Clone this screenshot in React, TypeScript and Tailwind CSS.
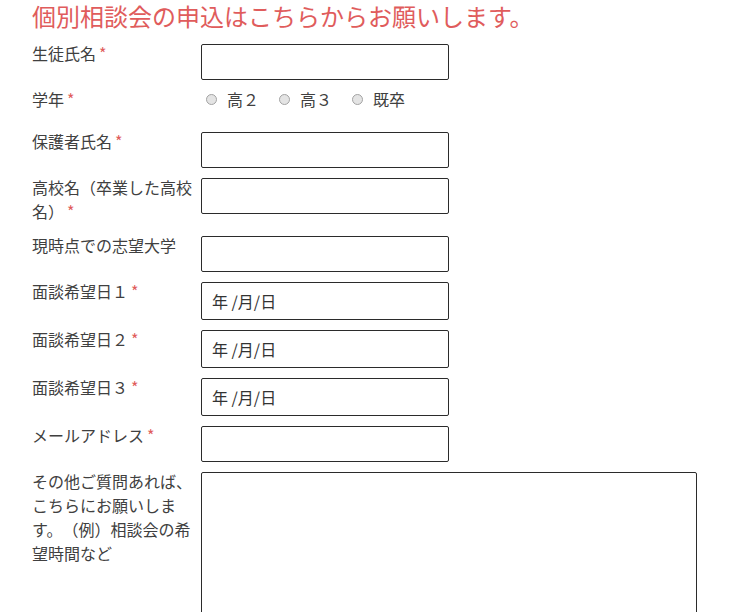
import React from "react";

const font = { fontFamily: '"Noto Sans CJK JP", "Noto Sans", sans-serif' };

const Req = () => <span className="ml-[3px] text-[#e05c5c]">*</span>;

const Row = ({
  label,
  required,
  children,
}: {
  label: React.ReactNode;
  required?: boolean;
  children: React.ReactNode;
}) => (
  <div className="flex items-start">
    <div className="-mt-[3px] w-[169px] shrink-0 pb-[3px] pr-[8px] text-[16px] leading-[24px] text-[#404040] [text-spacing-trim:space-all]">
      {label}
      {required && <Req />}
    </div>
    {children}
  </div>
);

const TextInput = () => (
  <input
    type="text"
    className="h-[36px] w-[248px] rounded-[2px] border border-[#2b2b2b] bg-white px-[10px] text-[16px] outline-none"
  />
);

const DateInput = () => (
  <input
    type="text"
    placeholder="年 /月/日"
    className="h-[38px] w-[248px] rounded-[2px] border border-[#2b2b2b] bg-white px-[10px] text-[16px] text-[#333] outline-none placeholder:text-[#333]"
  />
);

const Radio = ({ label }: { label: string }) => (
  <label className="ml-[5px] mr-[15px] flex items-center">
    <span className="h-[11px] w-[11px] rounded-full border border-[#a3a3a3] bg-[#e4e4e4]" />
    <span className="ml-[10px] text-[16px] leading-[24px] text-[#404040]">{label}</span>
  </label>
);

export default function App() {
  return (
    <div className="min-h-screen bg-white pl-[32px]" style={font}>
      <h1 className="mb-[13px] text-[24px] font-normal leading-[31px] text-[#e05c5c]">
        個別相談会の申込はこちらからお願いします。
      </h1>
      <div className="flex flex-col gap-[10px]">
        <Row label="生徒氏名" required>
          <TextInput />
        </Row>
        <Row label="学年" required>
          <div className="-mt-[3px] flex h-[35px] items-start">
            <Radio label="高２" />
            <Radio label="高３" />
            <Radio label="既卒" />
          </div>
        </Row>
        <Row label="保護者氏名" required>
          <TextInput />
        </Row>
        <Row label="高校名（卒業した高校名）" required>
          <TextInput />
        </Row>
        <Row label="現時点での志望大学">
          <TextInput />
        </Row>
        <Row label="面談希望日１" required>
          <DateInput />
        </Row>
        <Row label="面談希望日２" required>
          <DateInput />
        </Row>
        <Row label="面談希望日３" required>
          <DateInput />
        </Row>
        <Row label="メールアドレス" required>
          <TextInput />
        </Row>
        <Row label="その他ご質問あれば、こちらにお願いします。（例）相談会の希望時間など">
          <textarea className="h-[200px] w-[496px] resize-none rounded-[2px] border border-[#2b2b2b] bg-white outline-none" />
        </Row>
      </div>
    </div>
  );
}
